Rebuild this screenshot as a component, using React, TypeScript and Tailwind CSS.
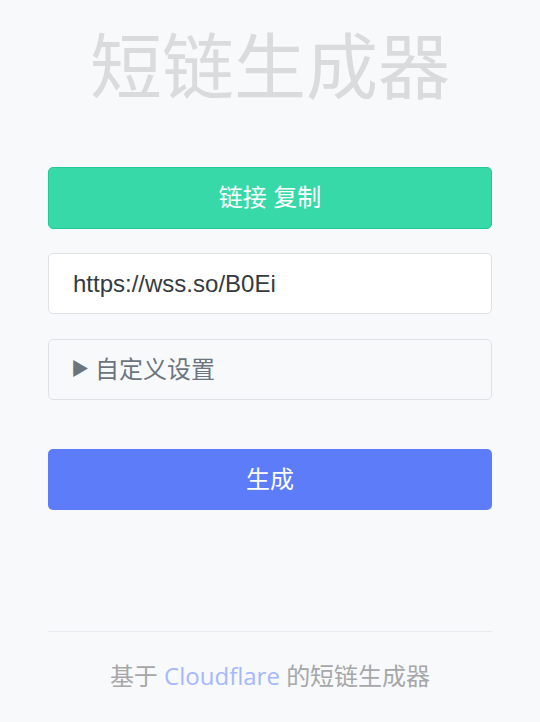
export default function App() {
  const cjk = { fontFamily: '"Liberation Sans", "Noto Sans CJK SC", sans-serif' };
  return (
    <div className="min-h-[722px] w-[540px] bg-[#f8f9fb]" style={cjk}>
      <div className="px-[48px]">
        <h1 className="pt-[22px] text-center text-[72px] leading-[92px] font-normal text-[#dadbdd]">短链生成器</h1>
        <button className="mt-[53px] flex h-[62px] w-full items-center justify-center rounded-[5px] border border-[#20c997] bg-[#38d9a9] text-[24px] text-white">
          链接 复制
        </button>
        <div className="mt-[24px] flex h-[61px] items-center rounded-[5px] border border-[#dee2e6] bg-white px-[24px] text-[24px] text-[#343a40]">
          https://wss.so/B0Ei
        </div>
        <div className="mt-[25px] flex h-[61px] items-center gap-[6px] rounded-[5px] border border-[#dee2e6] pl-[22px] pr-[24px] text-[24px] text-[#6c757d]">
          <span className="text-[18px]">▶</span>
          <span>自定义设置</span>
        </div>
        <button className="mt-[49px] flex h-[61px] w-full items-center justify-center rounded-[5px] bg-[#5c7cfa] text-[24px] text-white">
          生成
        </button>
        <div className="mt-[121px] border-t border-[#e9ecef]" />
        <p className="mt-[27px] text-center text-[24px] leading-[34px] text-[#a6a7a9]" style={{ fontFamily: '"Open Sans", "Noto Sans CJK SC", sans-serif' }}>
          基于 <span className="text-[#a5b8ff]">Cloudflare</span> 的短链生成器
        </p>
      </div>
    </div>
  );
}
